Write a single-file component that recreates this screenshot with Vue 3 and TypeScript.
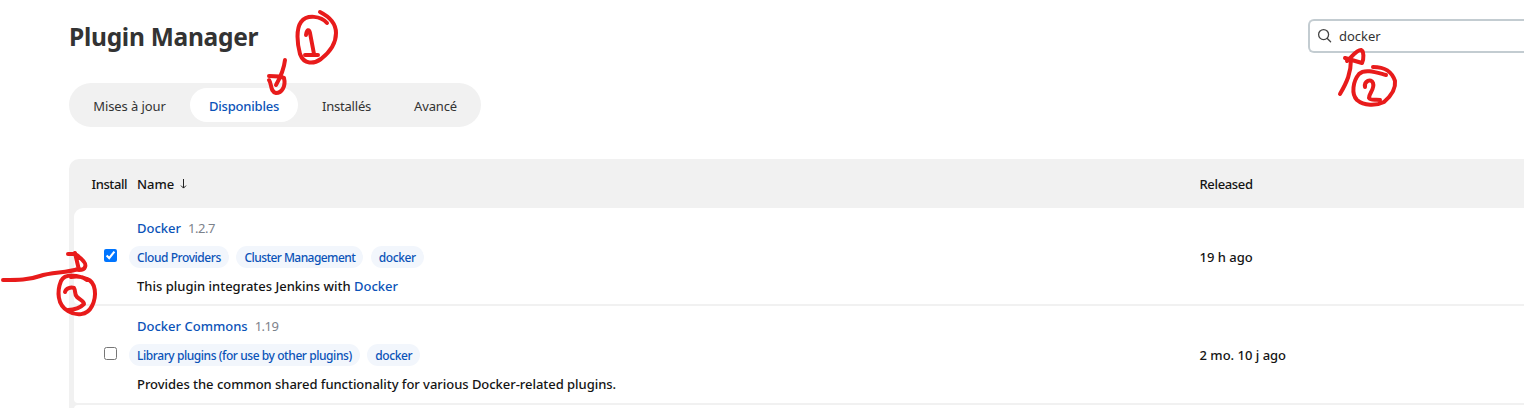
<script setup lang="ts">
interface Plugin {
  name: string
  version: string
  tags: string[]
  text: string
  link?: string
  released: string
  checked: boolean
}

const tabs = [
  { label: 'Mises à jour', cls: 'updates' },
  { label: 'Disponibles', cls: 'active' },
  { label: 'Installés', cls: 'installed' },
  { label: 'Avancé', cls: 'advanced' },
]

const plugins: Plugin[] = [
  {
    name: 'Docker',
    version: '1.2.7',
    tags: ['Cloud Providers', 'Cluster Management', 'docker'],
    text: 'This plugin integrates Jenkins with',
    link: 'Docker',
    released: '19 h ago',
    checked: true,
  },
  {
    name: 'Docker Commons',
    version: '1.19',
    tags: ['Library plugins (for use by other plugins)', 'docker'],
    text: 'Provides the common shared functionality for various Docker-related plugins.',
    released: '2 mo. 10 j ago',
    checked: false,
  },
]
</script>

<template>
  <div class="page">
    <header class="top">
      <h1>Plugin Manager</h1>
      <div class="search">
        <svg class="glass" viewBox="0 0 16 16" width="16" height="16">
          <circle cx="6.6" cy="6.6" r="5" />
          <path d="M10.3 10.5 L13.6 13.8" />
        </svg>
        <span>docker</span>
      </div>
    </header>

    <nav class="tabs">
      <a v-for="t in tabs" :key="t.label" class="tab" :class="t.cls">{{ t.label }}</a>
    </nav>

    <section class="table">
      <div class="row head">
        <span class="h-install">Install</span>
        <span class="h-name">Name <svg class="arrow" viewBox="0 0 7 10" width="7" height="10"><path d="M3.5 0V9M1 6.6L3.5 9.1L6 6.6" /></svg></span>
        <span class="h-released">Released</span>
      </div>
      <div v-for="p in plugins" :key="p.name" class="row item">
        <div class="check"><input type="checkbox" :checked="p.checked" /></div>
        <div class="info">
          <div class="name"><a>{{ p.name }}</a><span class="version">{{ p.version }}</span></div>
          <div class="tags"><span v-for="t in p.tags" :key="t" class="tag">{{ t }}</span></div>
          <div class="desc">{{ p.text }} <a v-if="p.link">{{ p.link }}</a></div>
        </div>
        <div class="released">{{ p.released }}</div>
      </div>
      <div class="row item"></div>
    </section>

    <svg class="ink" viewBox="0 0 1524 408" width="1524" height="408">
      <path d="M327 23C321 16 307 14 301 22C296 29 297 43 300 54C304 65 314 64 321 59C330 52 336 43 336 33C336 23 328 16 320 12" />
      <path d="M306 35C307 29 309 29 310 33L314 54M305 55H318" />
      <path d="M285 60C284 69 280 78 276 85M269 76C276 76 281 76 284 78C286 86 282 93 276 93C270 92 272 84 269 80" />
      <path d="M1340 94C1347 82 1351 73 1351 59M1345 58L1362 63C1364 59 1364 51 1361 50C1356 50 1352 57 1347 61" />
      <path d="M1386 75C1378 73 1365 68 1359 74C1353 81 1351 94 1357 100C1364 106 1376 106 1384 102C1391 96 1396 89 1395 81C1392 72 1386 67 1373 67" />
      <path d="M1365 87C1364 81 1371 78 1373 83C1375 89 1369 93 1369 98C1371 101 1376 99 1380 100" />
      <path d="M3 280C18 280 29 280 40 276C51 272 67 273 78 269M68 254H75C81 258 87 263 85 267C84 270 81 270 79 270L75 253" />
      <path d="M87 280C79 275 65 273 61 281C57 291 57 305 68 311C76 316 87 316 92 306C97 296 96 282 87 279C81 276 76 276 71 277" />
      <path d="M65 292C66 288 71 287 74 288C76 291 74 294 77 297C80 300 84 301 84 304C80 308 74 310 68 310" />
    </svg>
  </div>
</template>

<style>
body {
  margin: 0;
  overflow: hidden;
  background: #fff;
}
</style>

<style scoped>
.page {
  position: relative;
  width: 1524px;
  height: 408px;
  overflow: hidden;
  box-sizing: border-box;
  padding-left: 69px;
  font-family: 'Noto Sans', 'Open Sans', sans-serif;
  font-size: 13px;
  font-weight: 500;
  line-height: 20px;
  color: #141414;
  white-space: nowrap;
}
.top {
  display: flex;
  justify-content: space-between;
  align-items: flex-start;
  height: 83px;
}
h1 {
  margin: 20px 0 0;
  font-size: 24.5px;
  line-height: 34px;
  font-weight: 700;
  letter-spacing: -0.27px;
  color: #333;
}
.search {
  display: flex;
  align-items: center;
  gap: 6px;
  box-sizing: border-box;
  width: 216px;
  height: 34px;
  margin-top: 19px;
  padding-left: 7px;
  border: 2px solid #c3ccd1;
  border-right: 0;
  border-radius: 6px 0 0 6px;
  font-weight: 400;
  color: #333;
}
.glass {
  fill: none;
  stroke: #444;
  stroke-width: 1.3;
  stroke-linecap: round;
}
.tabs {
  display: flex;
  align-items: center;
  box-sizing: border-box;
  width: 412px;
  height: 44px;
  padding: 5px;
  border-radius: 22px;
  background: #f1f1f1;
}
.tab {
  box-sizing: border-box;
  height: 34px;
  line-height: 36px;
  border-radius: 17px;
  text-align: center;
  font-weight: 450;
  color: #333;
}
.updates { width: 111px; margin-right: 5px; letter-spacing: -0.1px; }
.active { width: 108px; margin-right: 5px; background: #fff; color: #0b53b8; font-weight: 500; letter-spacing: -0.2px; }
.installed { width: 87px; margin-right: 5px; letter-spacing: -0.2px; }
.advanced { width: 81px; letter-spacing: -0.15px; }
.table {
  margin-top: 32px;
  padding-left: 5px;
  border-radius: 10px 0 0 0;
  background: #f1f1f1;
}
.row {
  display: grid;
  grid-template-columns: 63px 1062.5px 1fr;
}
.head {
  height: 49px;
  align-items: center;
}
.h-install { padding-left: 17.5px; letter-spacing: -0.4px; }
.h-released { letter-spacing: -0.35px; }
.arrow {
  margin-left: 2px;
  fill: none;
  stroke: #222;
  stroke-width: 1;
}
.item {
  height: 97px;
  margin-bottom: 2px;
  background: #fff;
  border-radius: 4px 0 0 4px;
  align-items: start;
}
.head + .item { height: 96px; border-top-left-radius: 9px; }
.check { padding: 41px 0 0 30px; }
.check input { display: block; width: 13px; height: 13px; margin: 0; }
.info { padding-top: 10px; }
.name { height: 20px; margin-bottom: 8px; }
.version { margin-left: 7px; font-weight: 400; color: #7c828b; letter-spacing: -0.5px; }
a { color: #0b53b8; }
.tags { display: flex; gap: 7.6px; margin: 0 0 8px -8px; }
.tag {
  height: 22px;
  line-height: 24px;
  padding: 0 8px;
  border-radius: 11px;
  background: #f2f6fc;
  color: #0b53b8;
  font-size: 12px;
  letter-spacing: -0.43px;
}
.tag:nth-child(2):not(:last-child) { letter-spacing: -0.56px; }
.desc { letter-spacing: -0.04px; }
.head + .item .desc { letter-spacing: 0; }
.released { padding-top: 39px; }
.ink {
  position: absolute;
  left: 0;
  top: 0;
  fill: none;
  stroke: #e81b1b;
  stroke-width: 4;
  stroke-linecap: round;
  stroke-linejoin: round;
}
</style>
